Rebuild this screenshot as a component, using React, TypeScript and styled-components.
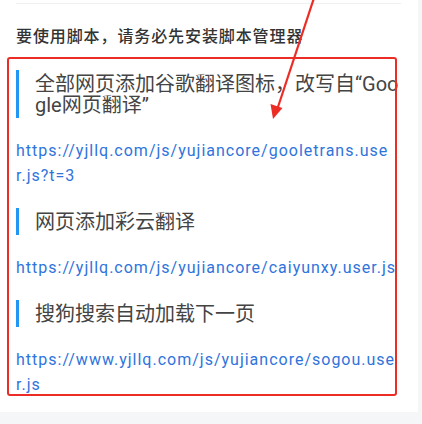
import { FC } from 'react';
import styled, { createGlobalStyle } from 'styled-components';

const GlobalStyle = createGlobalStyle`
    html, body {
        margin: 0;
        padding: 0;
        background: #f5f6f8;
    }
    body {
        font-family: Roboto, "Noto Sans CJK SC", sans-serif;
    }
`

interface ScriptItem {
    title: string
    url: string
}

const scripts: ScriptItem[] = [
    {
        title: '全部网页添加谷歌翻译图标，改写自“Google网页翻译”',
        url: 'https://yjllq.com/js/yujiancore/gooletrans.user.js?t=3',
    },
    {
        title: '网页添加彩云翻译',
        url: 'https://yjllq.com/js/yujiancore/caiyunxy.user.js',
    },
    {
        title: '搜狗搜索自动加载下一页',
        url: 'https://www.yjllq.com/js/yujiancore/sogou.user.js',
    },
]

const Page = styled.div`
    position: relative;
    width: 422px;
    height: 424px;
    overflow: hidden;
`

const Card = styled.div`
    width: 418px;
    min-height: 412px;
    box-sizing: border-box;
    padding: 3px 21px 0 16px;
    background: #fff;
`

const Divider = styled.div`
    height: 1px;
    margin-right: -4px;
    background: #eef0f2;
`

const Heading = styled.h3`
    margin: 21px 0 21px 0;
    font-size: 16px;
    line-height: 24px;
    font-weight: 500;
    color: #333;
    letter-spacing: 0.9px;
`

const ScriptTitle = styled.div`
    padding: 4px 0 2px 16px;
    margin-right: -5px;
    border-left: 3px solid #2196f3;
    font-size: 20px;
    line-height: 21px;
    color: #444;
    word-break: break-all;
`

const ScriptLink = styled.a`
    display: block;
    margin: 20px 0 20px 0;
    font-size: 16px;
    line-height: 25px;
    letter-spacing: 1px;
    color: #2f74dc;
    text-decoration: none;
    word-break: break-all;
`

const Highlight = styled.div`
    position: absolute;
    left: 7px;
    top: 57px;
    width: 390px;
    height: 339px;
    box-sizing: border-box;
    border: 2px solid #ec2d26;
    border-radius: 3px;
    pointer-events: none;
`

const Arrow = styled.svg`
    position: absolute;
    left: 0;
    top: 0;
    pointer-events: none;
`

const App: FC = () => {
    return (
        <Page>
            <GlobalStyle />
            <Card>
                <Divider />
                <Heading>要使用脚本，请务必先安装脚本管理器</Heading>
                {scripts.map((item) => (
                    <div key={item.url}>
                        <ScriptTitle>{item.title}</ScriptTitle>
                        <ScriptLink href={item.url}>{item.url}</ScriptLink>
                    </div>
                ))}
            </Card>
            <Highlight />
            <Arrow width="422" height="424" viewBox="0 0 422 424">
                <line x1="314" y1="-2" x2="277" y2="110" stroke="#ec2d26" strokeWidth="2.2" />
                <polygon points="273,119 270.5,104 282.5,108" fill="#ec2d26" />
            </Arrow>
        </Page>
    )
}

export default App
